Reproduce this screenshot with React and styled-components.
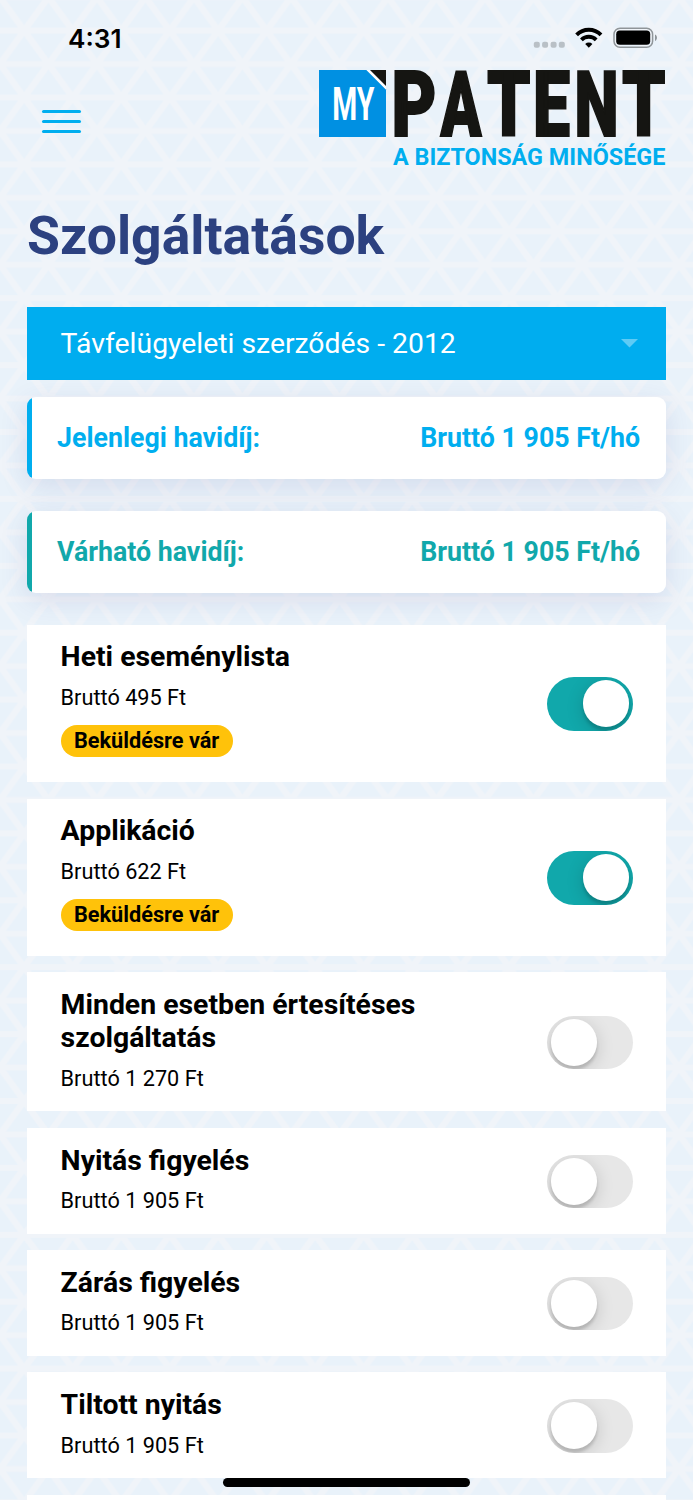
import React from "react";
import styled, {createGlobalStyle} from "styled-components";

const initialServices = [
	{id: 1, name: "Heti eseménylista", price: "Bruttó 495 Ft", active: true, pending: true},
	{id: 2, name: "Applikáció", price: "Bruttó 622 Ft", active: true, pending: true},
	{id: 3, name: "Minden esetben értesítéses szolgáltatás", price: "Bruttó 1 270 Ft"},
	{id: 4, name: "Nyitás figyelés", price: "Bruttó 1 905 Ft"},
	{id: 5, name: "Zárás figyelés", price: "Bruttó 1 905 Ft"},
	{id: 6, name: "Tiltott nyitás", price: "Bruttó 1 905 Ft"},
];

const GlobalStyle = createGlobalStyle`
	* {
		box-sizing: border-box;
	}
	body {
		margin: 0;
		font-family: Roboto, "Liberation Sans", sans-serif;
		overflow: hidden;
	}
`;

const Screen = styled.div`
	position: relative;
	height: 1500px;
	overflow: hidden;
	background: #e9f2fa;
`;

const PatternSvg = styled.svg`
	position: absolute;
	inset: 0;
	width: 100%;
	height: 100%;
`;

const Content = styled.div`
	position: relative;
	padding: 0 27px;
`;

const StatusBar = styled.div`
	display: flex;
	align-items: center;
	height: 60px;
	padding: 16px 7px 0 41px;
	font-family: Inter, sans-serif;
	font-size: 26.2px;
	font-weight: 600;
	color: #000;
`;

const Time = styled.span`
	flex: 1;
`;

const Header = styled.header`
	display: flex;
	justify-content: space-between;
	height: 120px;
`;

const MenuButton = styled.button`
	display: flex;
	flex-direction: column;
	gap: 6.7px;
	width: 39px;
	height: 24px;
	margin: 50.2px 0 0 15px;
	padding: 0;
	border: 0;
	background: none;
	span {
		height: 3.1px;
		border-radius: 2px;
		background: #00aeef;
	}
`;

const LogoSvg = styled.svg`
	overflow: visible;
`;

const Title = styled.h1`
	height: 126.7px;
	margin: 0;
	padding-top: 25px;
	font-size: 53.5px;
	font-weight: 700;
	line-height: 61px;
	color: #2c4180;
`;

const Select = styled.button`
	display: flex;
	align-items: center;
	justify-content: space-between;
	width: 100%;
	height: 73.3px;
	padding: 1px 28px 0 33.6px;
	border: 0;
	background: #00adef;
	color: #fff;
	font-family: inherit;
	font-size: 28.35px;
	text-align: left;
`;

const Fee = styled.div`
	display: flex;
	align-items: center;
	justify-content: space-between;
	height: 82px;
	margin-top: ${(props) => props.$gap}px;
	padding: 0 26px 0 30px;
	border-radius: 9px;
	background: linear-gradient(to right, ${(props) => props.$color} 5px, #fff 5px);
	box-shadow: 0 7px 28px rgba(60, 70, 150, 0.13);
	color: ${(props) => props.$color};
	font-size: 26.75px;
	font-weight: 700;
`;

const List = styled.div`
	display: flex;
	flex-direction: column;
	gap: 16.6px;
	margin-top: 31.6px;
`;

const Card = styled.div`
	display: flex;
	align-items: center;
	justify-content: space-between;
	min-height: 105.6px;
	padding: 15.7px 33.3px ${(props) => (props.$pending ? 25.4 : 18.7)}px 33.6px;
	background: #fff;
	color: #000;
`;

const Info = styled.div`
	width: 400px;
`;

const Name = styled.div`
	font-size: 28.4px;
	font-weight: 700;
	line-height: 33.3px;
`;

const Price = styled.div`
	margin-top: 11.2px;
	font-size: 21.7px;
	line-height: 26.7px;
`;

const Badge = styled.span`
	display: block;
	width: fit-content;
	height: 31.6px;
	margin-top: 13.5px;
	padding: 0 13.4px;
	border-radius: 16px;
	background: #ffc20a;
	font-size: 21.7px;
	font-weight: 700;
	line-height: 32px;
`;

const Switch = styled.button`
	display: flex;
	justify-content: ${(props) => (props.$on ? "flex-end" : "flex-start")};
	width: 85.6px;
	height: 53.6px;
	margin-top: ${(props) => (props.$pending ? 10.9 : 4.5)}px;
	padding: 3.4px;
	border: 0;
	border-radius: 27px;
	background: ${(props) => (props.$on ? "#11a8ab" : "#e7e7e7")};
	overflow: hidden;
	span {
		width: 46.8px;
		height: 46.8px;
		border-radius: 50%;
		background: #fff;
		box-shadow: 0 4px 3px rgba(0, 0, 0, 0.14), 0 4px 18px rgba(0, 0, 0, 0.16);
	}
`;

const HomeIndicator = styled.div`
	position: absolute;
	bottom: 13.5px;
	left: 223px;
	width: 247px;
	height: 9px;
	border-radius: 5px;
	background: #000;
`;

function Pattern() {
	return (
		<PatternSvg aria-hidden="true">
			<defs>
				<pattern
					id="triangles"
					x="24.2"
					y="30.6"
					width="48.5"
					height="66.9"
					patternUnits="userSpaceOnUse"
				>
					<g stroke="#f0f4f9">
						<path strokeWidth="6" d="M-5 0H55M-5 33.45H55M-5 66.9H55" />
						<path
							strokeWidth="6.4"
							d="M-24.25 -33.45L72.75 100.35M72.75 -33.45L-24.25 100.35M-24.25 33.45L24.25 -33.45M24.25 -33.45L72.75 33.45M-24.25 33.45L24.25 100.35M24.25 100.35L72.75 33.45"
						/>
					</g>
				</pattern>
			</defs>
			<rect width="100%" height="100%" fill="url(#triangles)" />
		</PatternSvg>
	);
}

function StatusIcons() {
	return (
		<svg width="126" height="24" viewBox="0 0 126 24">
			<g fill="#b9c0c6">
				<rect x="0.8" y="15.7" width="6" height="6" rx="2" />
				<rect x="9.1" y="15.7" width="6" height="6" rx="2" />
				<rect x="17.6" y="15.7" width="6" height="6" rx="2" />
				<rect x="25.8" y="15.7" width="6" height="6" rx="2" />
			</g>
			<g fill="none" stroke="#000" strokeWidth="3.9">
				<path d="M43.6 8.8a17.2 17.2 0 0 1 24.4 0" />
				<path d="M48.4 13.8a10.6 10.6 0 0 1 14.8 0" />
			</g>
			<path d="M55.8 21.7l-3.6-3.8a5.2 5.2 0 0 1 7.2 0z" fill="#000" />
			<rect x="81" y="2.2" width="38.6" height="19" rx="6" fill="none" stroke="#8f9599" strokeWidth="1.5" />
			<rect x="83.2" y="4.6" width="34" height="14.2" rx="3.6" fill="#000" />
			<path d="M122 8.6c2.6 1 2.6 5.4 0 6.4z" fill="#8f9599" />
		</svg>
	);
}

function Logo() {
	return (
		<LogoSvg width="350" height="112" viewBox="0 0 350 112">
			<path d="M3 10H50.5L70 29.5V77H3z" fill="#0090e2" />
			<path d="M50.5 10H54L70 26V29.5z" fill="#fff" />
			<path d="M54 10H70V26z" fill="#151512" />
			<text
				transform="translate(16.2 59.8) scale(0.62 1)"
				fill="#fff"
				fontSize="46"
				fontWeight="700"
				textLength="68"
				lengthAdjust="spacingAndGlyphs"
			>
				MY
			</text>
			<text
				y="76"
				fill="#151512"
				stroke="#151512"
				strokeWidth="2"
				fontSize="91.4"
				fontWeight="900"
			>
				<tspan x="75.5" textLength="45" lengthAdjust="spacingAndGlyphs">P</tspan>
				<tspan x="124.5" textLength="41" lengthAdjust="spacingAndGlyphs">A</tspan>
				<tspan x="171" textLength="43.5" lengthAdjust="spacingAndGlyphs">T</tspan>
				<tspan x="217" textLength="37" lengthAdjust="spacingAndGlyphs">E</tspan>
				<tspan x="258.5" textLength="44" lengthAdjust="spacingAndGlyphs">N</tspan>
				<tspan x="306" textLength="43.5" lengthAdjust="spacingAndGlyphs">T</tspan>
			</text>
			<text
				x="77"
				y="105.2"
				fill="#00aeef"
				fontSize="23.6"
				fontWeight="700"
				textLength="272.4"
				lengthAdjust="spacingAndGlyphs"
			>
				A BIZTONSÁG MINŐSÉGE
			</text>
		</LogoSvg>
	);
}

function ServiceItem({data}) {
	const [active, setActive] = React.useState(Boolean(data.active));

	return (
		<Card $pending={data.pending}>
			<Info>
				<Name>{data.name}</Name>
				<Price>{data.price}</Price>
				{data.pending && <Badge>Beküldésre vár</Badge>}
			</Info>
			<Switch
				role="switch"
				aria-checked={active}
				$on={active}
				$pending={data.pending}
				onClick={() => setActive(!active)}
			>
				<span />
			</Switch>
		</Card>
	);
}

function App() {
	return (
		<Screen>
			<GlobalStyle />
			<Pattern />
			<Content>
				<StatusBar>
					<Time>4:31</Time>
					<StatusIcons />
				</StatusBar>
				<Header>
					<MenuButton>
						<span />
						<span />
						<span />
					</MenuButton>
					<Logo />
				</Header>
				<Title>Szolgáltatások</Title>
				<Select>
					Távfelügyeleti szerződés - 2012
					<svg width="17" height="9" viewBox="0 0 17 9">
						<path d="M0 0H17L8.5 8.5z" fill="#fff" opacity="0.37" />
					</svg>
				</Select>
				<Fee $color="#00aeef" $gap={17}>
					<span>Jelenlegi havidíj:</span>
					<span>Bruttó 1 905 Ft/hó</span>
				</Fee>
				<Fee $color="#11a8ab" $gap={32}>
					<span>Várható havidíj:</span>
					<span>Bruttó 1 905 Ft/hó</span>
				</Fee>
				<List>
					{initialServices.map((service) => (
						<ServiceItem key={service.id} data={service} />
					))}
					<Card />
				</List>
			</Content>
			<HomeIndicator />
		</Screen>
	);
}

export default App;
